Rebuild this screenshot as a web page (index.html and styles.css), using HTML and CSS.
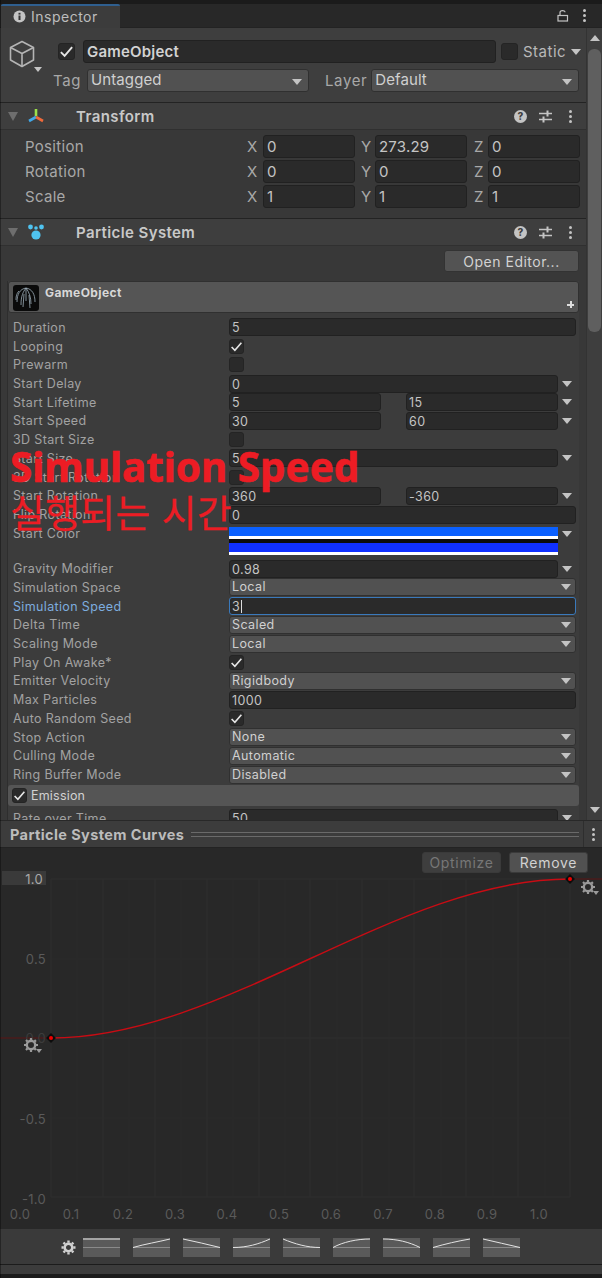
FILE: index.html
```html
<!DOCTYPE html>
<html lang="ko">
<head>
    <meta charset="UTF-8">
    <meta name="viewport" content="width=device-width, initial-scale=1.0">
    <title>Inspector</title>
    <link rel="stylesheet" href="styles.css">
</head>
<body>
<div class="window">

    <!-- Tab bar -->
    <div class="tabbar">
        <div class="tab">
            <svg class="tab-icon" width="13" height="13" viewBox="0 0 13 13"><circle cx="6.5" cy="6.5" r="6" fill="#c4c4c4"/><rect x="5.5" y="5.5" width="2" height="4.5" fill="#333"/><rect x="5.5" y="2.8" width="2" height="1.8" fill="#333"/></svg>
            <span>Inspector</span>
        </div>
        <div class="tab-tools">
            <svg width="12" height="13" viewBox="0 0 12 13" fill="none" stroke="#c4c4c4" stroke-width="1.2"><rect x="1" y="6.5" width="9.5" height="5.5"/><path d="M3 6.5V3.500C3 1 8 1 8 3.200"/></svg>
            <span class="dots"><i></i><i></i><i></i></span>
        </div>
    </div>

    <div class="inspector">
        <div class="content">

            <!-- GameObject header -->
            <section class="object-head">
                <div class="cube-wrap">
                    <svg width="26" height="28" viewBox="0 0 26 28" fill="none" stroke="#b4b4b4" stroke-width="1.6" stroke-linejoin="round"><path d="M13 1.500L24.500 7.500V20L13 26.500L1.500 20V7.500Z"/><path d="M1.500 7.500L13 13.500L24.500 7.500M13 13.500V26.500"/></svg>
                    <span class="arrow cube-arrow"></span>
                </div>
                <div class="object-fields">
                    <div class="object-row">
                        <span class="check big on"><svg viewBox="0 0 12 12"><path d="M1.500 6.500L4.500 9.500L10.500 2.500"/></svg></span>
                        <div class="field name-field">GameObject</div>
                        <span class="check big"></span>
                        <span class="static-label">Static</span>
                        <span class="arrow"></span>
                    </div>
                    <div class="object-row second">
                        <span class="tag-label">Tag</span>
                        <div class="dropdown tag-drop">Untagged<span class="arrow"></span></div>
                        <span class="layer-label">Layer</span>
                        <div class="dropdown layer-drop">Default<span class="arrow"></span></div>
                    </div>
                </div>
            </section>

            <!-- Transform -->
            <header class="comp-head">
                <span class="fold"></span>
                <svg class="comp-icon" width="18" height="16" viewBox="0 0 18 16"><path d="M9 1V8" stroke="#9ce04a" stroke-width="2.600"/><path d="M9 9L2 13" stroke="#41a8e8" stroke-width="2.600"/><path d="M9 9L16 13" stroke="#f0693a" stroke-width="2.600"/></svg>
                <h2>Transform</h2>
                <div class="comp-tools">
                    <span class="help">?</span>
                    <svg width="13" height="13" viewBox="0 0 13 13" stroke="#c4c4c4" stroke-width="1.400"><path d="M0 3.500H13M0 9.500H13"/><path d="M8.500 0.500V6.500M4.500 6.500V12.500" stroke-width="2"/></svg>
                    <span class="dots"><i></i><i></i><i></i></span>
                </div>
            </header>
            <section class="transform">
                <div class="vec-row">
                    <label>Position</label>
                    <span class="axis">X</span><div class="field vec">0</div>
                    <span class="axis">Y</span><div class="field vec">273.29</div>
                    <span class="axis">Z</span><div class="field vec">0</div>
                </div>
                <div class="vec-row">
                    <label>Rotation</label>
                    <span class="axis">X</span><div class="field vec">0</div>
                    <span class="axis">Y</span><div class="field vec">0</div>
                    <span class="axis">Z</span><div class="field vec">0</div>
                </div>
                <div class="vec-row">
                    <label>Scale</label>
                    <span class="axis">X</span><div class="field vec">1</div>
                    <span class="axis">Y</span><div class="field vec">1</div>
                    <span class="axis">Z</span><div class="field vec">1</div>
                </div>
            </section>

            <!-- Particle System -->
            <header class="comp-head">
                <span class="fold"></span>
                <svg class="comp-icon" width="18" height="16" viewBox="0 0 18 16" fill="#4fc3f0"><circle cx="3.500" cy="3" r="2.400"/><circle cx="14.500" cy="3" r="2.400"/><circle cx="9" cy="4" r="1.800"/><circle cx="9" cy="11" r="4.600"/></svg>
                <h2>Particle System</h2>
                <div class="comp-tools">
                    <span class="help">?</span>
                    <svg width="13" height="13" viewBox="0 0 13 13" stroke="#c4c4c4" stroke-width="1.400"><path d="M0 3.500H13M0 9.500H13"/><path d="M8.500 0.500V6.500M4.500 6.500V12.500" stroke-width="2"/></svg>
                    <span class="dots"><i></i><i></i><i></i></span>
                </div>
            </header>
            <section class="particles">
                <div class="open-row"><button class="btn-open">Open Editor...</button></div>

                <div class="module">
                    <div class="module-title">
                        <svg class="thumb" width="26" height="26" viewBox="0 0 26 26" fill="none" stroke="#9fb0bb" stroke-width="0.8"><path d="M13 3C7 4 4 9 4 17M13 3C10 7 8 11 8 20M13 3V16M13 3C16 7 18 12 18 19M13 3C19 4 22 9 22 17M6 6C3 9 3 13 3 15M11 9L10 22M16 10L17 23"/></svg>
                        <span>GameObject</span>
                        <span class="plus"></span>
                    </div>

                    <div class="row"><label>Duration</label><div class="field full">5</div></div>
                    <div class="row"><label>Looping</label><span class="check on"><svg viewBox="0 0 12 12"><path d="M1.500 6.500L4.500 9.500L10.500 2.500"/></svg></span></div>
                    <div class="row"><label>Prewarm</label><span class="check"></span></div>
                    <div class="row"><label>Start Delay</label><div class="field wide">0</div><span class="arrow end"></span></div>
                    <div class="row"><label>Start Lifetime</label><div class="field half">5</div><div class="field half second">15</div><span class="arrow end"></span></div>
                    <div class="row"><label>Start Speed</label><div class="field half">30</div><div class="field half second">60</div><span class="arrow end"></span></div>
                    <div class="row"><label>3D Start Size</label><span class="check"></span></div>
                    <div class="row"><label>Start Size</label><div class="field wide">5</div><span class="arrow end"></span></div>
                    <div class="row"><label>3D Start Rotation</label><span class="check"></span></div>
                    <div class="row"><label>Start Rotation</label><div class="field half">360</div><div class="field half second">-360</div><span class="arrow end"></span></div>
                    <div class="row"><label>Flip Rotation</label><div class="field full">0</div></div>
                    <div class="row color-row">
                        <label>Start Color</label>
                        <div class="gradient">
                            <div class="band first"></div>
                            <div class="band last"></div>
                        </div>
                        <span class="arrow end"></span>
                    </div>
                    <div class="row"><label>Gravity Modifier</label><div class="field wide">0.98</div><span class="arrow end"></span></div>
                    <div class="row"><label>Simulation Space</label><div class="dropdown full">Local<span class="arrow"></span></div></div>
                    <div class="row"><label class="active">Simulation Speed</label><div class="field full focus">3<span class="caret"></span></div></div>
                    <div class="row"><label>Delta Time</label><div class="dropdown full">Scaled<span class="arrow"></span></div></div>
                    <div class="row"><label>Scaling Mode</label><div class="dropdown full">Local<span class="arrow"></span></div></div>
                    <div class="row"><label>Play On Awake*</label><span class="check on"><svg viewBox="0 0 12 12"><path d="M1.500 6.500L4.500 9.500L10.500 2.500"/></svg></span></div>
                    <div class="row"><label>Emitter Velocity</label><div class="dropdown full">Rigidbody<span class="arrow"></span></div></div>
                    <div class="row"><label>Max Particles</label><div class="field full">1000</div></div>
                    <div class="row"><label>Auto Random Seed</label><span class="check on"><svg viewBox="0 0 12 12"><path d="M1.500 6.500L4.500 9.500L10.500 2.500"/></svg></span></div>
                    <div class="row"><label>Stop Action</label><div class="dropdown full">None<span class="arrow"></span></div></div>
                    <div class="row"><label>Culling Mode</label><div class="dropdown full">Automatic<span class="arrow"></span></div></div>
                    <div class="row"><label>Ring Buffer Mode</label><div class="dropdown full">Disabled<span class="arrow"></span></div></div>

                    <div class="emission">
                        <span class="check on"><svg viewBox="0 0 12 12"><path d="M1.500 6.500L4.500 9.500L10.500 2.500"/></svg></span>
                        <span>Emission</span>
                    </div>
                    <div class="row"><label>Rate over Time</label><div class="field wide">50</div><span class="arrow end"></span></div>
                </div>
            </section>
        </div>

        <div class="scrollbar">
            <span class="scroll-up"></span>
            <div class="scroll-thumb"></div>
            <span class="scroll-down"></span>
        </div>

        <!-- red note pasted over the screenshot -->
        <div class="note">
            <div class="note-title">Simulation Speed</div>
            <div class="note-sub">실행되는 시간</div>
        </div>
    </div>

    <!-- Curves -->
    <div class="curves-head">
        <h3>Particle System Curves</h3>
        <div class="double-line"></div>
        <div class="curves-menu"><span class="dots"><i></i><i></i><i></i></span></div>
    </div>

    <div class="graph">
        <svg class="plot" width="602" height="381" viewBox="0 848 602 381">
            <g class="grid-minor">
                <path d="M77 879V1197M129 879V1197M181 879V1197M233 879V1197M285 879V1197M337 879V1197M389 879V1197M441 879V1197M493 879V1197M545 879V1197"/>
                <path d="M51 959H570M51 1118H570"/>
            </g>
            <g class="grid-major">
                <path d="M51 879V1197M103 879V1197M155 879V1197M207 879V1197M259 879V1197M310 879V1197M362 879V1197M414 879V1197M466 879V1197M518 879V1197M570 879V1197"/>
                <path d="M51 879H570M51 1038H570M51 1197H570"/>
            </g>
            <path class="wrap-line" d="M0 1038H51M570 879H602"/>
            <path class="curve" d="M51 1038C225 1038 396 879 570 879"/>
            <g class="key"><rect x="47.500" y="1034.500" width="7" height="7" transform="rotate(45 51 1038)"/><circle cx="51" cy="1038" r="2"/></g>
            <g class="key"><rect x="566.500" y="875.500" width="7" height="7" transform="rotate(45 570 879)"/><circle cx="570" cy="879" r="2"/></g>

            <rect x="2" y="871" width="44" height="14" fill="#3a3a3a"/>
            <g class="y-labels">
                <text x="43" y="884" class="strong">1.0</text>
                <text x="46" y="964">0.5</text>
                <text x="46" y="1043" class="dim">0.0</text>
                <text x="46" y="1124">-0.5</text>
                <text x="46" y="1204">-1.0</text>
            </g>
            <g class="x-labels">
                <text x="20" y="1219">0.0</text>
                <text x="71" y="1219">0.1</text>
                <text x="123" y="1219">0.2</text>
                <text x="175" y="1219">0.3</text>
                <text x="227" y="1219">0.4</text>
                <text x="279" y="1219">0.5</text>
                <text x="331" y="1219">0.6</text>
                <text x="383" y="1219">0.7</text>
                <text x="435" y="1219">0.8</text>
                <text x="487" y="1219">0.9</text>
                <text x="539" y="1219">1.0</text>
            </g>
            <g class="gear-dim">
                <g transform="translate(31 1045)">
                    <circle r="4.200"/><path d="M0 -7V7M-7 0H7M-5 -5L5 5M-5 5L5 -5"/>
                    <path class="tip" d="M5 4H11L8 8Z"/>
                </g>
                <g transform="translate(588 887)">
                    <circle r="4.200"/><path d="M0 -7V7M-7 0H7M-5 -5L5 5M-5 5L5 -5"/>
                    <path class="tip" d="M5 4H11L8 8Z"/>
                </g>
            </g>
        </svg>
        <div class="graph-buttons">
            <button class="btn-graph off">Optimize</button>
            <button class="btn-graph">Remove</button>
        </div>
    </div>

    <!-- Preset strip -->
    <div class="presets">
        <svg class="gear" width="15" height="15" viewBox="-7.500 -7.500 15 15"><circle r="3.800" fill="none" stroke="#d0d0d0" stroke-width="2.600"/><path d="M0 -7V7M-7 0H7M-5 -5L5 5M-5 5L5 -5" stroke="#d0d0d0" stroke-width="2.400" stroke-dasharray="2.200 9.600"/></svg>
        <svg class="swatch" viewBox="0 0 37 19"><path class="mid" d="M0 9.500H37"/><path class="flat" d="M0 1H37"/></svg>
        <svg class="swatch" viewBox="0 0 37 19"><path class="mid" d="M0 9.500H37"/><path d="M0 9.500C12 6 25 4 37 1"/></svg>
        <svg class="swatch" viewBox="0 0 37 19"><path class="mid" d="M0 9.500H37"/><path d="M0 1C12 3.500 25 6.500 37 9.500"/></svg>
        <svg class="swatch" viewBox="0 0 37 19"><path class="mid" d="M0 9.500H37"/><path d="M0 9.500C14 9.500 26 6 37 1"/></svg>
        <svg class="swatch" viewBox="0 0 37 19"><path class="mid" d="M0 9.500H37"/><path d="M0 1C12 6 24 9.500 37 9.500"/></svg>
        <svg class="swatch" viewBox="0 0 37 19"><path class="mid" d="M0 9.500H37"/><path d="M0 9.500C10 4 24 1 37 1"/></svg>
        <svg class="swatch" viewBox="0 0 37 19"><path class="mid" d="M0 9.500H37"/><path d="M0 1C14 1 26 4 37 9.500"/></svg>
        <svg class="swatch" viewBox="0 0 37 19"><path class="mid" d="M0 9.500H37"/><path d="M0 9.500C12 6 25 3 37 1"/></svg>
        <svg class="swatch" viewBox="0 0 37 19"><path class="mid" d="M0 9.500H37"/><path d="M0 1C12 3.500 25 7 37 9.500"/></svg>
    </div>
    <div class="statusbar"></div>
</div>
</body>
</html>
```

FILE: styles.css
```css
/* Global */
* {
    box-sizing: border-box;
}

body {
    margin: 0;
    background-color: #1b1b1b;
    font-family: Inter, "Noto Sans CJK KR", sans-serif;
    color: #c4c4c4;
}

.window {
    position: relative;
    width: 602px;
    height: 1278px;
    overflow: hidden;
    padding-top: 4px;
}

/* dark line down the left edge of the panel */
.window::before {
    content: "";
    position: absolute;
    left: 0;
    top: 0;
    bottom: 0;
    z-index: 2;
    width: 1px;
    background-color: rgba(0, 0, 0, 0.35);
}

label {
    display: block;
}

/* Small shared bits */
.arrow {
    display: inline-block;
    width: 0;
    height: 0;
    border-left: 5px solid transparent;
    border-right: 5px solid transparent;
    border-top: 6px solid #c4c4c4;
}

.dots {
    display: inline-flex;
    flex-direction: column;
    gap: 2px;
}

.dots i {
    display: block;
    width: 3px;
    height: 3px;
    border-radius: 50%;
    background-color: #c4c4c4;
}

.field {
    height: 18px;
    flex: none;
    background-color: #2a2a2a;
    border: 1px solid #212121;
    border-radius: 3px;
    font-size: 12.5px;
    line-height: 17px;
    padding-left: 2px;
    letter-spacing: 0.4px;
    color: #c4c4c4;
}

.dropdown {
    position: relative;
    height: 18px;
    flex: none;
    background-color: #515151;
    border: 1px solid #303030;
    border-radius: 3px;
    font-size: 12.5px;
    line-height: 16px;
    padding-left: 2px;
    letter-spacing: 0.4px;
    color: #d0d0d0;
}

.dropdown .arrow {
    position: absolute;
    right: 4px;
    top: 5px;
}

.check {
    display: block;
    width: 15px;
    height: 15px;
    flex: none;
    background-color: #2a2a2a;
    border: 1px solid #242424;
    border-radius: 3px;
}

.check svg {
    display: block;
    width: 100%;
    height: 100%;
    fill: none;
    stroke: #e6e6e6;
    stroke-width: 1.5;
}

.check.big {
    width: 17px;
    height: 17px;
}

/* Tab bar */
.tabbar {
    display: flex;
    justify-content: space-between;
    height: 24px;
    background-color: #282828;
    border-bottom: 1px solid #232323;
}

.tab {
    display: flex;
    align-items: center;
    gap: 5px;
    width: 119px;
    height: 24px;
    margin-left: 1px;
    padding: 0 0 2px 12px;
    background-color: #3c3c3c;
    border-top: 2px solid #2f5f8f;
    border-radius: 2px 2px 0 0;
    font-size: 14px;
    letter-spacing: 0.5px;
    color: #bdbdbd;
}

.tab-tools {
    display: flex;
    align-items: center;
    gap: 14px;
    padding-right: 16px;
    height: 23px;
}

/* Inspector area */
.inspector {
    position: relative;
    display: flex;
    height: 792px;
    overflow: hidden;
    background-color: #3c3c3c;
}

.content {
    width: 586px;
    flex: none;
}

.object-head {
    display: flex;
    height: 75px;
    padding: 12px 0 0 9px;
    background-color: #3e3e3e;
    border-bottom: 1px solid #232323;
}

.cube-wrap {
    position: relative;
    width: 32px;
    flex: none;
}

.cube-arrow {
    position: absolute;
    left: 25px;
    top: 27px;
    border-left-width: 4px;
    border-right-width: 4px;
    border-top-width: 5px;
}

.object-fields {
    flex: 1;
}

.object-row {
    display: flex;
    align-items: center;
    height: 23px;
    margin-left: 17px;
}

.object-row.second {
    margin: 6px 0 0 12px;
}

.name-field {
    width: 413px;
    height: 23px;
    margin: 0 5px 0 8px;
    font-size: 15px;
    font-weight: 600;
    line-height: 21px;
    padding-left: 3px;
    letter-spacing: 0.2px;
    color: #d2d2d2;
}

.static-label {
    margin: 0 5px;
    font-size: 15px;
    letter-spacing: 0.5px;
    color: #b8b8b8;
}

.tag-label,
.layer-label {
    font-size: 15px;
    letter-spacing: 0.6px;
    color: #a8a8a8;
}

.tag-drop,
.layer-drop {
    height: 23px;
    font-size: 15px;
    line-height: 19px;
    padding-left: 3px;
    letter-spacing: 0.1px;
}

.tag-drop {
    width: 222px;
    margin: 0 16px 0 6px;
}

.layer-drop {
    width: 208px;
    margin-left: 4px;
}

.tag-drop .arrow,
.layer-drop .arrow {
    top: 9px;
    right: 6px;
}

/* Component headers */
.comp-head {
    display: flex;
    align-items: center;
    height: 27px;
    background-color: #3e3e3e;
    border-bottom: 1px solid #303030;
}

.fold {
    width: 0;
    height: 0;
    margin-left: 8px;
    border-left: 5.5px solid transparent;
    border-right: 5.5px solid transparent;
    border-top: 9px solid #6e6e6e;
}

.comp-icon {
    margin-left: 9px;
}

.comp-head h2 {
    margin: 0 0 0 31px;
    font-size: 15px;
    font-weight: 600;
    letter-spacing: 0.4px;
    color: #c8c8c8;
}

.comp-tools {
    display: flex;
    align-items: center;
    gap: 12px;
    margin-left: auto;
    padding-right: 14px;
}

.comp-tools .dots {
    margin-left: 5px;
}

.help {
    width: 13px;
    height: 13px;
    border-radius: 50%;
    background-color: #c4c4c4;
    color: #3e3e3e;
    font-size: 10px;
    font-weight: 800;
    line-height: 13px;
    text-align: center;
}

/* Transform */
.transform {
    height: 89px;
    padding-top: 4px;
    background-color: #383838;
    border-bottom: 1px solid #232323;
}

.vec-row {
    display: flex;
    align-items: center;
    height: 25px;
    padding-left: 25px;
}

.vec-row label {
    width: 222px;
    font-size: 15px;
    letter-spacing: 0.3px;
    color: #a8a8a8;
}

.axis {
    width: 16px;
    font-size: 15px;
    color: #a8a8a8;
}

.vec + .axis {
    margin-left: 6px;
    width: 14px;
}

.vec + .axis + .vec + .axis {
    margin-left: 7px;
}

.vec {
    width: 92px;
    height: 23px;
    font-size: 15px;
    line-height: 22px;
    padding-left: 3px;
    letter-spacing: 0.2px;
}

/* Particle System */
.particles {
    padding: 0 7px;
    background-color: #383838;
}

.open-row {
    display: flex;
    justify-content: flex-end;
    height: 35px;
    padding-top: 4px;
}

.btn-open {
    width: 135px;
    height: 22px;
    padding: 0;
    background-color: #535353;
    border: 1px solid #333;
    border-radius: 3px;
    font-family: inherit;
    font-size: 14px;
    letter-spacing: 0.5px;
    color: #d2d2d2;
}

.module {
    width: 572px;
    background-color: #3c3c3c;
    border-left: 1px solid #2e2e2e;
    padding-bottom: 60px;
}

.module-title {
    position: relative;
    display: flex;
    height: 32px;
    margin-bottom: 5px;
    padding: 3px 0 0 4px;
    gap: 6px;
    background-color: #555;
    border: 1px solid #303030;
    border-radius: 3px;
    font-size: 12px;
    font-weight: 700;
    letter-spacing: 0.4px;
    color: #d8d8d8;
}

.thumb {
    background-color: #0a0a0a;
    border-radius: 3px;
}

.plus {
    position: absolute;
    right: 4px;
    bottom: 4px;
    width: 7px;
    height: 7px;
    background:
        linear-gradient(#ddd, #ddd) center / 7px 2px no-repeat,
        linear-gradient(#ddd, #ddd) center / 2px 7px no-repeat;
}

.row {
    display: flex;
    align-items: center;
    height: 18.72px;
    padding-left: 5px;
}

.row label {
    width: 216px;
    flex: none;
    font-size: 12.5px;
    letter-spacing: 0.35px;
    white-space: nowrap;
    color: #a2a2a2;
}

.row label.active {
    color: #7cacdf;
}

.row .field.full,
.row .dropdown.full {
    width: 347px;
}

.row .field.wide {
    width: 329px;
}

.row .field.half {
    width: 152px;
}

.row .field.half.second {
    margin-left: 25px;
}

.arrow.end {
    margin-left: 4px;
}

.field.focus {
    border-color: #3a79bb;
}

.caret {
    display: inline-block;
    width: 1px;
    height: 13px;
    margin-left: 1px;
    vertical-align: -2px;
    background-color: #ddd;
}

.color-row {
    height: 35.4px;
    align-items: flex-start;
    padding-top: 3px;
}

.gradient {
    width: 329px;
    height: 28px;
    flex: none;
    background-color: #0c0c0c;
    display: flex;
    flex-direction: column;
    justify-content: space-between;
}

.band {
    height: 12px;
    border-bottom: 3px solid #fff;
}

.band.first {
    background-color: #0a60ff;
}

.band.last {
    background-color: #1030ff;
}

.color-row .arrow {
    margin-top: 4px;
}

.color-row label {
    margin-top: -1px;
}

.emission {
    display: flex;
    align-items: center;
    gap: 4px;
    height: 21px;
    margin: 1px 0 3px 0;
    padding-left: 4px;
    background-color: #555;
    border-radius: 3px;
    font-size: 12.5px;
    letter-spacing: 0.2px;
    color: #d2d2d2;
}

/* Scrollbar */
.scrollbar {
    position: relative;
    width: 16px;
    flex: none;
    background-color: #3e3e3e;
    border-left: 1px solid #333;
}

.scroll-up,
.scroll-down {
    position: absolute;
    left: 3px;
    width: 0;
    height: 0;
    border-left: 5px solid transparent;
    border-right: 5px solid transparent;
}

.scroll-up {
    top: 7px;
    border-bottom: 6px solid #c4c4c4;
}

.scroll-down {
    bottom: 7px;
    border-top: 6px solid #c4c4c4;
}

.scroll-thumb {
    position: absolute;
    top: 21px;
    left: 1px;
    width: 13px;
    height: 283px;
    border-radius: 6px;
    background-color: #5f5f5f;
}

/* Red note over the panel */
.note {
    position: absolute;
    left: 10px;
    top: 414px;
    color: #ed1c24;
    pointer-events: none;
}

.note-title {
    font-family: "Noto Sans", sans-serif;
    font-size: 40.4px;
    font-weight: 700;
    line-height: 50px;
    white-space: nowrap;
    -webkit-text-stroke: 0.6px #ed1c24;
}

.note-sub {
    margin-top: -3px;
    font-family: "Noto Sans CJK KR", sans-serif;
    font-size: 37.7px;
    line-height: 44px;
    letter-spacing: 0.5px;
    white-space: nowrap;
    -webkit-text-stroke: 0.3px #ed1c24;
}

/* Curves panel */
.curves-head {
    display: flex;
    align-items: center;
    height: 28px;
    padding-left: 10px;
    background-color: #3c3c3c;
    border-top: 1px solid #282828;
    border-bottom: 1px solid #232323;
}

.curves-head h3 {
    margin: 0;
    font-size: 14.5px;
    font-weight: 700;
    letter-spacing: 0.4px;
    color: #bcbcbc;
}

.double-line {
    flex: 1;
    height: 5px;
    margin: 0 4px 0 7px;
    border-top: 1px solid #6a6a6a;
    border-bottom: 1px solid #6a6a6a;
}

.curves-menu {
    display: flex;
    align-items: center;
    justify-content: center;
    width: 19px;
    height: 100%;
    border-left: 1px solid #2e2e2e;
}

.graph {
    position: relative;
    height: 381px;
    background-color: #282828;
}

.plot {
    display: block;
}

.grid-minor {
    fill: none;
    stroke: #2a2a2a;
}

.grid-major {
    fill: none;
    stroke: #2e2e2e;
}

.wrap-line {
    fill: none;
    stroke: #5a1414;
}

.curve {
    fill: none;
    stroke: #c80c14;
    stroke-width: 1.4;
}

.key rect {
    fill: #0c0c0c;
}

.key circle {
    fill: #f00000;
}

.y-labels text {
    font-size: 13px;
    text-anchor: end;
    letter-spacing: 0.3px;
    fill: #5a5a5a;
}

.y-labels text.strong {
    fill: #a8a8a8;
}

.y-labels text.dim {
    fill: #3c3c3c;
}

.x-labels text {
    font-size: 13px;
    text-anchor: middle;
    letter-spacing: 0.3px;
    fill: #5a5a5a;
}

.gear-dim circle {
    fill: none;
    stroke: #9a9a9a;
    stroke-width: 2.4;
}

.gear-dim path {
    fill: none;
    stroke: #9a9a9a;
    stroke-width: 2.2;
    stroke-dasharray: 2 10;
}

.gear-dim path.tip {
    fill: #9a9a9a;
    stroke: none;
    stroke-dasharray: none;
}

.graph-buttons {
    position: absolute;
    top: 4px;
    right: 14px;
    display: flex;
    gap: 8px;
}

.btn-graph {
    width: 79px;
    height: 21px;
    padding: 0;
    background-color: #515151;
    border: 1px solid #3a3a3a;
    border-radius: 3px;
    font-family: inherit;
    font-size: 14px;
    letter-spacing: 0.7px;
    color: #d2d2d2;
}

.btn-graph.off {
    background-color: #3e3e3e;
    color: #777;
}

/* Preset strip */
.presets {
    display: flex;
    align-items: center;
    gap: 13px;
    height: 36px;
    padding: 1px 0 0 61px;
    background-color: #3a3a3a;
    border-bottom: 1px solid #1c1c1c;
}

.gear {
    flex: none;
    margin-right: -6px;
}

.swatch {
    width: 37px;
    height: 19px;
    flex: none;
    background-color: #5a5a5a;
    fill: none;
    stroke: #e4e4e4;
    stroke-width: 1;
}

.swatch .mid {
    stroke: #8a8a8a;
}

.swatch .flat {
    stroke: #bcbcbc;
    stroke-width: 1.4;
}

.statusbar {
    height: 9px;
    background-color: #3c3c3c;
}
```
